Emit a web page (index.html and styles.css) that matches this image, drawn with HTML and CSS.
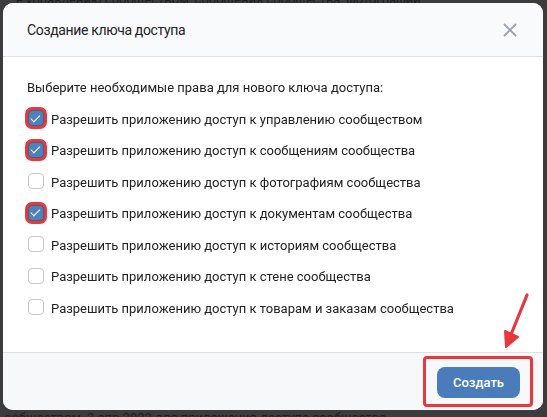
FILE: index.html
```html
<!DOCTYPE html>
<html lang="ru">
<head>
<meta charset="utf-8">
<title>Создание ключа доступа</title>
<link rel="stylesheet" href="styles.css">
</head>
<body>
<div class="page">
  <p class="bg-line bg-top">е управлению сообществом, сообщения сообщества, фотографии</p>
  <p class="bg-line bg-bottom">ообществом, 2 апр 2022 для приложения доступа сообщества</p>
</div>
<div class="overlay">
  <div class="modal">
    <div class="modal-head">
      <div class="modal-title">Создание ключа доступа</div>
      <svg class="close" width="14" height="14" viewBox="0 0 14 14"><path d="M1.5 1.5 L12.5 12.5 M12.5 1.5 L1.5 12.5" stroke="#99a2ad" stroke-width="1.8" stroke-linecap="round"/></svg>
    </div>
    <div class="modal-body">
      <div class="row intro">Выберите необходимые права для нового ключа доступа:</div>
      <label class="row"><span class="cb on"></span>Разрешить приложению доступ к управлению сообществом</label>
      <label class="row"><span class="cb on"></span>Разрешить приложению доступ к сообщениям сообщества</label>
      <label class="row"><span class="cb"></span>Разрешить приложению доступ к фотографиям сообщества</label>
      <label class="row"><span class="cb on"></span>Разрешить приложению доступ к документам сообщества</label>
      <label class="row"><span class="cb"></span>Разрешить приложению доступ к историям сообщества</label>
      <label class="row"><span class="cb"></span>Разрешить приложению доступ к стене сообщества</label>
      <label class="row"><span class="cb"></span>Разрешить приложению доступ к товарам и заказам сообщества</label>
    </div>
    <div class="modal-foot">
      <button class="btn">Создать</button>
    </div>
  </div>
  <svg class="arrow" width="40" height="70" viewBox="0 0 40 70"><path d="M33 5 L16 47" stroke="#e8383d" stroke-width="3.2" stroke-linecap="round"/><path d="M12 57 L11 41 L24 47 Z" fill="#e8383d" stroke="#e8383d" stroke-width="2" stroke-linejoin="round"/></svg>
</div>
</body>
</html>
```
FILE: styles.css
```css
html, body {
  margin: 0;
  padding: 0;
  height: 100%;
}
body {
  background: #3c3c3c;
  font-family: Roboto, "Noto Sans", Arial, sans-serif;
  overflow: hidden;
}
.page {
  height: 100%;
  display: flex;
  flex-direction: column;
  justify-content: space-between;
}
.bg-line {
  margin: 0;
  font-size: 13px;
  line-height: 16px;
  color: #1c1f24;
  padding-left: 16px;
}
.bg-top { margin-top: -8px; }
.bg-bottom { margin-bottom: -9px; padding-left: 4px; }
.overlay {
  position: fixed;
  inset: 0;
  padding: 3px 4px 7px 3px;
  display: flex;
}
.modal {
  flex: 1;
  display: flex;
  flex-direction: column;
  background: #fff;
  border-radius: 10px;
  overflow: hidden;
}
.modal-head {
  height: 54px;
  flex: none;
  box-sizing: border-box;
  background: #f9fafc;
  border-bottom: 1px solid #dce1e6;
  display: flex;
  align-items: center;
  justify-content: space-between;
  padding: 0 26px 0 24px;
}
.modal-title {
  font-size: 14px;
  color: #222;
  letter-spacing: -0.35px;
}
.close { display: block; }
.modal-body {
  flex: 1;
  padding: 15px 24px 0 24px;
}
.row {
  height: 31.5px;
  display: flex;
  align-items: center;
  font-size: 13px;
  color: #222;
}
.cb {
  width: 14px;
  height: 14px;
  border: 1px solid #c0c7d0;
  border-radius: 4px;
  margin: 0 7px 0 1px;
  box-sizing: content-box;
  flex: none;
  position: relative;
  top: -1px;
}
.cb.on {
  background: #5181b8;
  border-color: #3f5f86;
  box-shadow: 0 0 0 3px #e8383d;
}
.cb.on::after {
  content: "";
  position: absolute;
  left: 4px;
  top: 1.5px;
  width: 4px;
  height: 7.5px;
  border: solid #fff;
  border-width: 0 1.6px 1.6px 0;
  transform: rotate(45deg);
}
.modal-foot {
  height: 58px;
  flex: none;
  box-sizing: border-box;
  background: #f7f8fa;
  border-top: 1px solid #dce1e6;
  display: flex;
  align-items: center;
  justify-content: flex-end;
  padding: 0 23px 0 0;
}
.btn {
  position: relative;
  width: 83px;
  height: 31px;
  border: 0;
  border-radius: 8px;
  background: #4a7bba;
  color: #fff;
  font-family: Roboto, "Noto Sans", Arial, sans-serif;
  font-size: 13px;
  font-weight: 500;
  margin-top: 2px;
}
.btn::after {
  content: "";
  position: absolute;
  left: -14px;
  right: -13px;
  top: -11px;
  bottom: -9px;
  border: 3px solid #e8383d;
  border-radius: 4px;
}
.arrow {
  position: absolute;
  left: 494px;
  top: 290px;
}
```
